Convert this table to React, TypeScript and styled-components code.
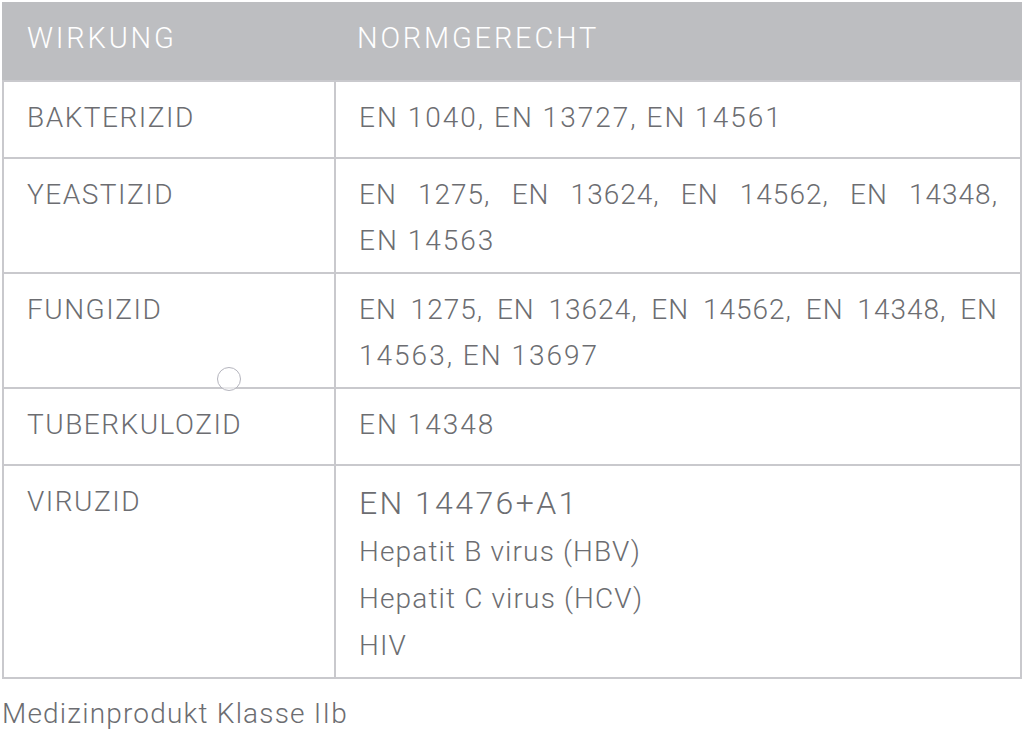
import React from "react";
import styled, { createGlobalStyle } from "styled-components";

const Global = createGlobalStyle`
  html, body { margin: 0; padding: 0; background: #ffffff; }
  body { font-family: "Roboto", "Liberation Sans", Arial, sans-serif; }
`;

const Page = styled.div`
  position: relative;
  padding: 2px 0 0 2px;
  width: 1024px;
  height: 733px;
  box-sizing: border-box;
  overflow: hidden;
`;

const Table = styled.div`
  width: 1020px;
  box-sizing: border-box;
  border: 2px solid #c9c9cd;
  border-top: none;
  display: flex;
  flex-direction: column;
  color: #6c6d71;
  font-weight: 300;
  font-size: 28px;
  letter-spacing: 1.5px;
`;

const Row = styled.div<{ $header?: boolean }>`
  display: grid;
  grid-template-columns: 332px 1fr;
  border-top: 2px solid ${(p) => (p.$header ? "#bdbec1" : "#c9c9cd")};
  background: ${(p) => (p.$header ? "#bdbec1" : "#ffffff")};
  color: ${(p) => (p.$header ? "#ffffff" : "inherit")};
  margin-left: ${(p) => (p.$header ? "-2px" : "0")};
  margin-right: ${(p) => (p.$header ? "-2px" : "0")};
`;

const Cell = styled.div<{ $first?: boolean; $header?: boolean }>`
  box-sizing: border-box;
  min-height: 75px;
  padding: ${(p) => (p.$header ? "11px 22px 19px 25px" : "13px 22px 8px 23px")};
  padding-left: ${(p) => (p.$first && p.$header ? "25px" : "23px")};
  border-right: ${(p) => (p.$first && !p.$header ? "2px solid #c9c9cd" : "none")};
  line-height: 46px;
  font-size: ${(p) => (p.$header ? "29px" : "inherit")};
  letter-spacing: ${(p) => (p.$header ? "2.8px" : p.$first ? "1.5px" : "2px")};
`;

const JustLine = styled.div`
  text-align: justify;
  text-align-last: justify;
  letter-spacing: 1px;
`;

const BigLine = styled.div`
  font-size: 32px;
  line-height: 49px;
  letter-spacing: 2.4px;
`;

const Line = styled.div`
  line-height: 47px;
  letter-spacing: 1.15px;
`;

const Footer = styled.div`
  margin-top: 12px;
  font-size: 28px;
  line-height: 46px;
  font-weight: 300;
  letter-spacing: 1.2px;
  color: #6c6d71;
`;

const Cursor = styled.div`
  position: absolute;
  left: 217px;
  top: 367px;
  width: 24px;
  height: 24px;
  border-radius: 50%;
  border: 1.5px solid #b4b4bd;
  box-sizing: border-box;
  background: rgba(255, 255, 255, 0.6);
`;

export default function App() {
  return (
    <>
      <Global />
      <Page>
        <Table>
          <Row $header>
            <Cell $first $header>WIRKUNG</Cell>
            <Cell $header>NORMGERECHT</Cell>
          </Row>
          <Row>
            <Cell $first>BAKTERIZID</Cell>
            <Cell>EN 1040, EN 13727, EN 14561</Cell>
          </Row>
          <Row>
            <Cell $first>YEASTIZID</Cell>
            <Cell>
              <JustLine>EN 1275, EN 13624, EN 14562, EN 14348,</JustLine>
              <div>EN 14563</div>
            </Cell>
          </Row>
          <Row>
            <Cell $first>FUNGIZID</Cell>
            <Cell>
              <JustLine>EN 1275, EN 13624, EN 14562, EN 14348, EN</JustLine>
              <div>14563, EN 13697</div>
            </Cell>
          </Row>
          <Row>
            <Cell $first>TUBERKULOZID</Cell>
            <Cell>EN 14348</Cell>
          </Row>
          <Row>
            <Cell $first>VIRUZID</Cell>
            <Cell>
              <BigLine>EN 14476+A1</BigLine>
              <Line>Hepatit B virus (HBV)</Line>
              <Line>Hepatit C virus (HCV)</Line>
              <Line>HIV</Line>
            </Cell>
          </Row>
        </Table>
        <Footer>Medizinprodukt Klasse IIb</Footer>
        <Cursor />
      </Page>
    </>
  );
}
